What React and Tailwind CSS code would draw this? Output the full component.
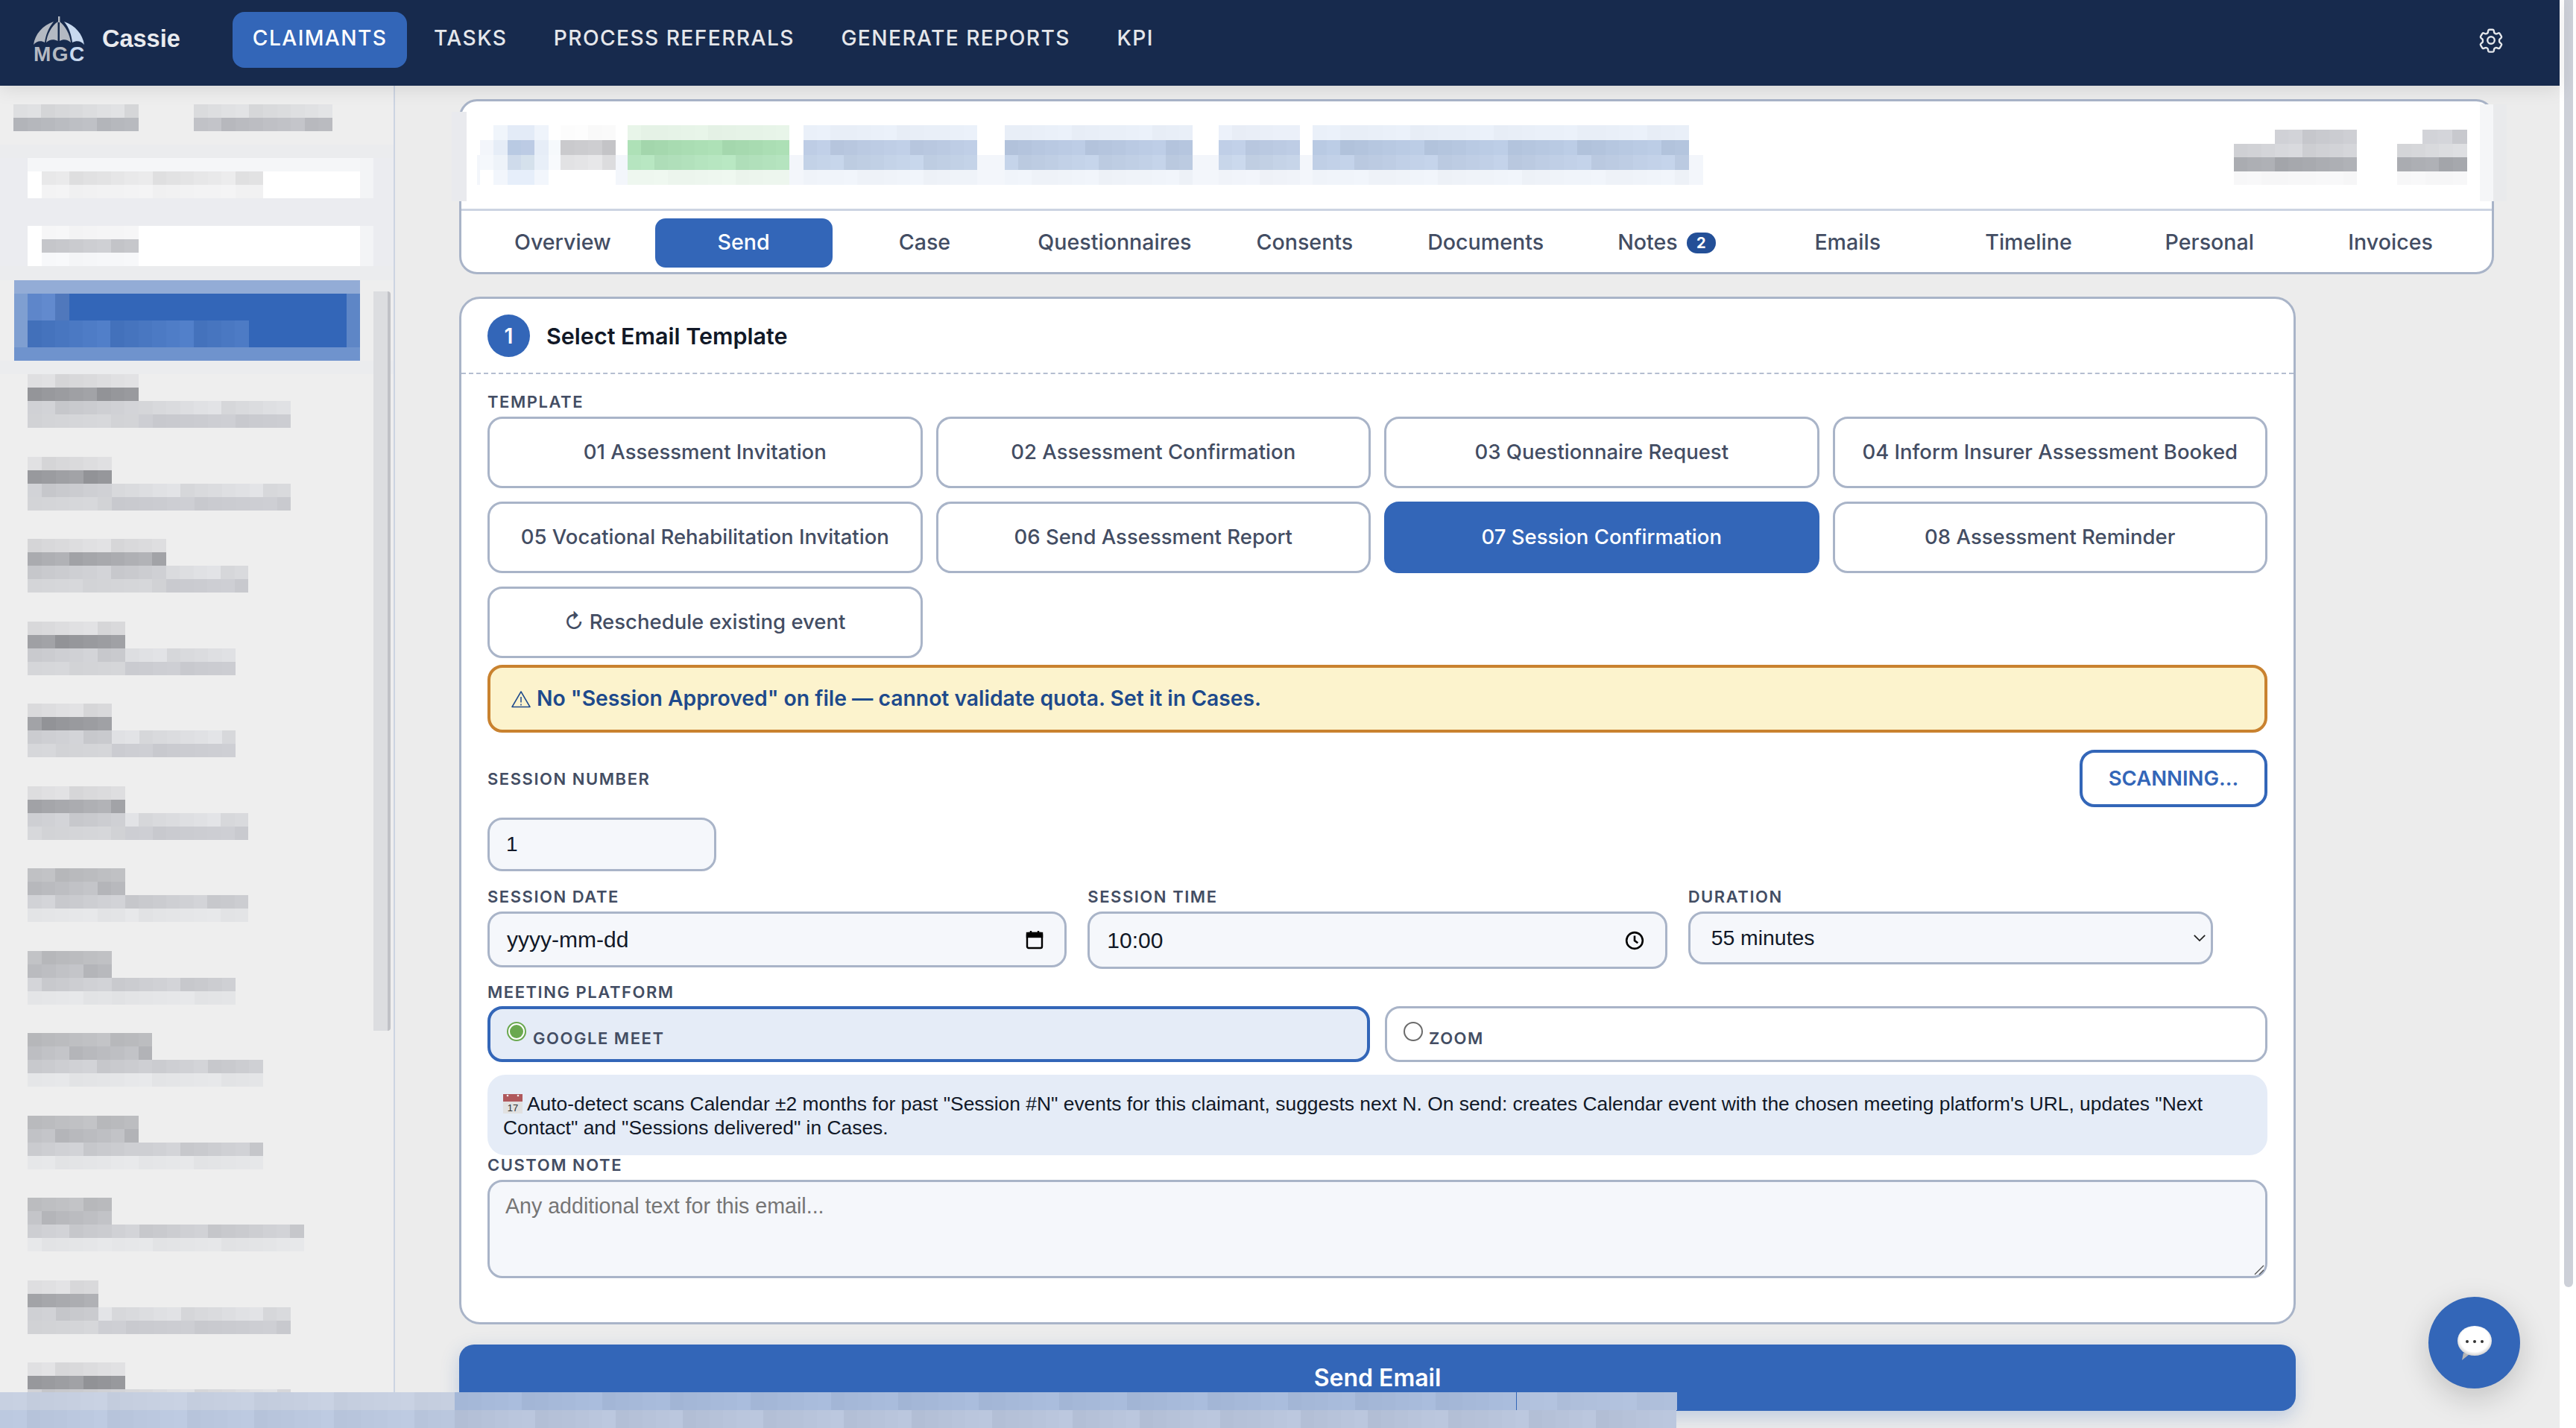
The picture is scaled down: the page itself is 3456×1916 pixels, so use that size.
import React from 'react';

const NAV = ['TASKS', 'PROCESS REFERRALS', 'GENERATE REPORTS', 'KPI'];
const TABS = ['Overview', 'Send', 'Case', 'Questionnaires', 'Consents', 'Documents', 'Notes', 'Emails', 'Timeline', 'Personal', 'Invoices'];
const TEMPLATES = [
  '01 Assessment Invitation',
  '02 Assessment Confirmation',
  '03 Questionnaire Request',
  '04 Inform Insurer Assessment Booked',
  '05 Vocational Rehabilitation Invitation',
  '06 Send Assessment Report',
  '07 Session Confirmation',
  '08 Assessment Reminder',
];

// name width / sub width of the pixelated rows in the sidebar
const PEOPLE = [
  [149, 353], [113, 353], [186, 296], [131, 279], [113, 279], [131, 296], [131, 296],
  [113, 279], [167, 316], [149, 316], [113, 371], [95, 353], [131, 353],
];

// the avatar in the claimant header, cell by cell
const AVATAR = [
  ['#ffffff', '#f0f5fb', '#e3ebf7', '#e3ebf7', '#eff4fb', '#ffffff'],
  ['#f3f6fb', '#e6edf7', '#b9cae3', '#bccbe4', '#e6edf7', '#f6f9fc'],
  ['#f5f8fc', '#eef3f9', '#cfdbeb', '#d5e1ec', '#e8eff8', '#f8fafd'],
  ['#ffffff', '#f2f6fc', '#e6eefa', '#e6eefa', '#f2f6fc', '#ffffff'],
];

// small jitter so the pixelated blocks do not look flat
function jitter(hex, i, amt = 7) {
  const n = parseInt(hex.slice(1), 16);
  const d = ((i * 37 + 11) % 17) / 16 - 0.5;
  const f = (v) => Math.max(0, Math.min(255, Math.round(v + d * amt * 2)));
  return `rgb(${f((n >> 16) & 255)},${f((n >> 8) & 255)},${f(n & 255)})`;
}

function Pixels({ width, color, h = 18, step = 18.5, seed = 0, amt }) {
  const count = Math.max(1, Math.round(width / step));
  return (
    <div className="flex shrink-0" style={{ width, height: h }}>
      {Array.from({ length: count }).map((_, i) => (
        <div key={i} className="flex-1" style={{ backgroundColor: jitter(color, i + seed, amt) }}></div>
      ))}
    </div>
  );
}

function BlurBlock({ width, rows, h = 20, step = 18.4, className = '' }) {
  return (
    <div className={`relative shrink-0 ${className}`} style={{ width }}>
      {rows.map((c, i) => (
        <Pixels key={i} width={width} color={c} h={h} step={step} seed={i * 5 + width} amt={i === 1 || i === 2 ? 6 : 2} />
      ))}
    </div>
  );
}

function Person({ name, sub, idx }) {
  // the lower rows of the list blur a little differently from the upper ones
  const lower = idx >= 6 && idx < 11;
  return (
    <div className="h-[110.5px] pl-[37px]">
      <Pixels width={name} color={lower ? '#bcbdc0' : '#dcdcde'} seed={idx} />
      <Pixels width={name} color={lower ? '#bbbcc0' : idx % 3 === 2 ? '#a9aaae' : '#9a9b9f'} seed={idx + 3} amt={9} />
      <div className="flex">
        <Pixels width={name} color={lower ? '#cdced2' : '#cccdd1'} seed={idx + 6} />
        <Pixels width={sub - name} color={lower ? '#cccdd1' : '#dcdde0'} seed={idx + 2} />
      </div>
      <div className="flex">
        <Pixels width={name} color={lower ? '#e5e6e8' : '#d4d5d8'} seed={idx + 8} amt={3} />
        <Pixels width={sub - name} color={lower ? '#e4e5e7' : '#cbccd1'} seed={idx + 1} amt={3} />
      </div>
    </div>
  );
}

function Label({ children, className = '' }) {
  return <p className={`text-[22px] leading-[26px] font-semibold tracking-[0.07em] uppercase text-[#434d63] font-['Inter',sans-serif] ${className}`}>{children}</p>;
}

function Logo() {
  return (
    <div className="w-[68px] h-[62px] relative shrink-0">
      <svg viewBox="0 0 68 40" className="w-[68px] h-[40px] block">
        <rect x="33" y="0" width="2.4" height="8" fill="#b4b9c2" />
        <path d="M0 38 C2 24 12 12 27 7 C20 15 16 26 15 35 C10 32 4 33 0 38 Z" fill="#b4b9c2" />
        <path d="M17 35 C18 25 24 13 32.5 7 L32.5 33 C27 30 21 31 17 35 Z" fill="#b4b9c2" />
        <path d="M35 7 C43 13 49 25 50 35 C46 31 40 30 35 33 Z" fill="#b4b9c2" />
        <path d="M41 7 C56 12 66 24 68 38 C64 33 58 32 52 35 C51 26 48 15 41 7 Z" fill="#c8d9ef" />
      </svg>
      <p className="absolute left-0 top-[37px] text-[28px] leading-[27px] font-bold font-['Liberation_Sans',sans-serif] text-[#b4b9c2] tracking-[0.05em] whitespace-nowrap">MG<span className="text-[#c8d9ef]">C</span></p>
    </div>
  );
}

function GearIcon() {
  return (
    <svg viewBox="0 0 24 24" className="w-[38px] h-[38px]" fill="none" stroke="#e5e7eb" strokeWidth="1.5" strokeLinecap="round" strokeLinejoin="round">
      <path d="M9.6 3.9c.1-.5.6-.9 1.1-.9h2.6c.5 0 1 .4 1.1.9l.2 1.4c.1.4.4.7.7.9l.4.2c.3.2.8.3 1.1.1l1.3-.5c.5-.2 1.1 0 1.4.5l1.3 2.2c.3.5.1 1.1-.3 1.4l-1.1.9c-.3.2-.5.6-.4 1v.9c0 .4.1.7.4 1l1.1.9c.4.3.6.9.3 1.4l-1.3 2.2c-.3.5-.9.7-1.4.5l-1.3-.5c-.4-.1-.8-.1-1.1.1l-.4.2c-.3.2-.6.5-.7.9l-.2 1.4c-.1.5-.6.9-1.1.9h-2.6c-.5 0-1-.4-1.1-.9l-.2-1.4c-.1-.4-.4-.7-.7-.9l-.4-.2c-.3-.2-.8-.3-1.1-.1l-1.3.5c-.5.2-1.1 0-1.4-.5l-1.3-2.2c-.3-.5-.1-1.1.3-1.4l1.1-.9c.3-.2.5-.6.4-1v-.9c0-.4-.1-.7-.4-1l-1.1-.9c-.4-.3-.6-.9-.3-1.4l1.3-2.2c.3-.5.9-.7 1.4-.5l1.3.5c.4.1.8.1 1.1-.1l.4-.2c.3-.2.6-.5.7-.9z" />
      <circle cx="12" cy="12" r="3" />
    </svg>
  );
}

function CalendarEmoji() {
  return (
    <svg viewBox="0 0 26 26" className="inline-block w-[26px] h-[26px] align-[-4px] mr-[6px]">
      <rect x="0" y="0" width="26" height="26" fill="#e1e1e1" />
      <rect x="0" y="0" width="26" height="10" fill="#b0585c" />
      <circle cx="6" cy="2" r="1.3" fill="#f2f2f2" />
      <circle cx="20" cy="2" r="1.3" fill="#f2f2f2" />
      <text x="13" y="23" textAnchor="middle" fontSize="13" fill="#333333" fontFamily="Liberation Sans, sans-serif">17</text>
    </svg>
  );
}

export default function App() {
  return (
    <div className="relative w-[3456px] h-[1916px] overflow-hidden bg-white flex font-['Inter',sans-serif]">
      <div className="w-[3434px] h-full flex flex-col bg-[#ececec]">

        {/* Top nav */}
        <header className="relative z-10 h-[115px] shrink-0 bg-[#172a4d] flex items-start pl-[45px] pr-[73px] shadow-[0_4px_24px_rgba(0,0,0,0.1)]">
          <div className="mt-[22px]"><Logo /></div>
          <span className="ml-[24px] mt-[32px] text-[32.5px] leading-[40px] font-semibold text-[#e9ebef] font-['Liberation_Sans',sans-serif]">Cassie</span>
          <nav className="ml-[70px] mt-[16px] flex items-start gap-[8.5px]">
            <a className="h-[75px] px-[27px] pt-[18px] rounded-[16px] bg-[#3366b8] text-[28.2px] leading-[34px] font-medium tracking-[0.05em] text-white">CLAIMANTS</a>
            {NAV.map((item) => (
              <a key={item} className="h-[75px] px-[27px] pt-[18px] text-[28.2px] leading-[34px] font-medium tracking-[0.05em] text-[#e5e7eb]">{item}</a>
            ))}
          </nav>
          <div className="ml-auto mt-[35px]"><GearIcon /></div>
        </header>

        <div className="flex-1 flex min-h-0">

          {/* Sidebar, names are pixelated in the source */}
          <aside className="relative w-[530px] shrink-0 bg-[#eeeeee] border-r-2 border-[#ccd4e2] overflow-hidden pt-[25px]">
            <div className="flex pl-[18px]">
              <div>
                <Pixels width={168} color="#dbdcde" />
                <Pixels width={168} color="#b9bbc0" seed={2} />
              </div>
              <div className="ml-[74px]">
                <Pixels width={186} color="#dcdddf" seed={4} />
                <Pixels width={186} color="#bdbec3" seed={6} />
              </div>
            </div>
            <div className="mt-[18px] h-[18px] bg-[#ebecee]"></div>
            <div className="bg-[#ebecf0] pl-[37px] pr-[27px]">
              <div className="bg-[#f3f4f6] pr-[18px]">
                <div className="bg-white">
                  <div className="h-[18px] bg-[#f5f6f8]"></div>
                  <div className="pl-[19px]"><Pixels width={297} color="#e5e5e6" /></div>
                  <div className="pl-[19px]"><Pixels width={297} color="#f2f2f3" amt={2} /></div>
                </div>
              </div>
              <div className="h-[37px]"></div>
              <div className="bg-[#f3f4f6] pr-[18px]">
                <div className="bg-white">
                  <div className="pl-[19px]"><Pixels width={130} color="#f5f5f6" amt={2} /></div>
                  <div className="pl-[19px]"><Pixels width={130} color="#c9cace" seed={3} /></div>
                  <div className="pl-[19px]"><Pixels width={130} color="#f6f7f9" amt={2} /></div>
                </div>
              </div>
            </div>
            <div className="h-[19px] bg-[#ebecee]"></div>
            <div className="ml-[19px] w-[464px] h-[108px] bg-[#3366b8] flex flex-col">
              <div className="h-[18px] bg-[#93acd6]"></div>
              <div className="flex-1 border-x-[18px] border-l-[#7f9fd1] border-r-[#5e86c6]">
                <Pixels width={56} color="#5a82c6" h={36} amt={10} />
                <Pixels width={297} color="#4a78c2" h={36} amt={8} seed={2} />
              </div>
              <div className="h-[18px] bg-[#6f93cd]"></div>
            </div>
            <div className="h-[18px] bg-[#ebecee]"></div>
            {PEOPLE.map((p, i) => (
              <Person key={i} name={p[0]} sub={p[1]} idx={i} />
            ))}
            {/* sidebar scrollbar */}
            <div className="absolute left-[501px] top-[276px] w-[23px] h-[992px] bg-[#dcdde0] border-r-[4px] border-[#c0c1c6] rounded-tr-[4px] rounded-br-[4px]"></div>
          </aside>

          <main className="flex-1 pl-[86px] pt-[18px] min-w-0 relative">

            {/* Claimant header + tabs */}
            <div className="w-[2730px] h-[235px] bg-white border-[3px] border-[#a9b4c8] rounded-[24px] flex flex-col">
              <div className="relative h-[147px] border-b-[3px] border-[#ccd4e2] pl-[25px] pr-[16px] pt-[32px] flex shrink-0">
                {/* haze between the blurred words */}
                <div className="absolute left-[21px] top-[72px] w-[1645px] h-[40px] bg-[#f3f6fb]"></div>
                <div className="relative shrink-0 w-[110px]">
                  {AVATAR.map((row, r) => (
                    <div key={r} className="flex h-[20px]">
                      {row.map((c, i) => (
                        <div key={i} className="flex-1" style={{ backgroundColor: c }}></div>
                      ))}
                    </div>
                  ))}
                </div>
                <BlurBlock width={74} className="ml-[-2px]" rows={['#fbfbfb', '#c8c8cb', '#e2e2e4', '#ffffff']} />
                <BlurBlock width={217} className="ml-[16px]" rows={['#e6f3e7', '#a9dcb2', '#b3e2bd', '#edf6ee']} />
                <BlurBlock width={233} className="ml-[19px]" rows={['#e9eff8', '#bccbe3', '#c2d1e6', '#eff3f9']} />
                <BlurBlock width={252} className="ml-[37px]" rows={['#e9eff8', '#b8c8e1', '#c0cfe5', '#eff3f9']} />
                <BlurBlock width={109} className="ml-[35px]" rows={['#eaeff8', '#bccbe3', '#c6d4e8', '#f0f3f9']} />
                <BlurBlock width={505} className="ml-[17px]" rows={['#e9eff8', '#b7c8e1', '#bfcee5', '#eff3f9']} />
                <div className="ml-auto flex gap-[19px] mt-[6px]">
                  <div className="w-[201px]">
                    <div className="ml-[73px]"><Pixels width={110} h={19} color="#cdced3" /></div>
                    <div className="ml-[18px]"><Pixels width={165} h={18} color="#d3d4d8" seed={3} /></div>
                    <div className="ml-[18px]"><Pixels width={165} h={19} color="#a9abb0" seed={5} /></div>
                    <div className="ml-[18px]"><Pixels width={165} h={18} color="#f7f7f8" amt={1} /></div>
                  </div>
                  <div className="w-[128px]">
                    <div className="ml-[51px]"><Pixels width={60} h={19} color="#cfd0d5" /></div>
                    <div className="ml-[17px]"><Pixels width={94} h={18} color="#d8d9dc" seed={3} /></div>
                    <div className="ml-[17px]"><Pixels width={94} h={19} color="#a9abb0" seed={5} /></div>
                    <div className="ml-[17px]"><Pixels width={94} h={18} color="#f7f7f8" amt={1} /></div>
                  </div>
                </div>
              </div>
              <div className="flex-1 flex items-center gap-[5px] px-[17px] pt-[3px]">
                {TABS.map((tab) => (
                  <div key={tab} className={`flex-1 h-[66px] px-[28px] rounded-[14px] flex items-center justify-center gap-[12px] text-[28.6px] font-medium whitespace-nowrap ${tab === 'Send' ? 'bg-[#3366b8] text-white' : 'text-[#434d63]'}`}>
                    {tab}
                    {tab === 'Notes' && <span className="w-[39px] h-[28px] rounded-full bg-[#234f97] text-white text-[20px] font-bold flex items-center justify-center">2</span>}
                  </div>
                ))}
              </div>
            </div>

            {/* Step 1 */}
            <section className="mt-[30px] w-[2464px] h-[1379px] bg-white border-[3px] border-[#a9b4c8] rounded-[28px]">
              <div className="h-[101px] border-b-2 border-dashed border-[#b4bed0] pl-[35px] flex items-center gap-[22px]">
                <div className="w-[57px] h-[57px] rounded-full bg-[#3366b8] text-white text-[28px] font-semibold flex items-center justify-center">1</div>
                <h2 className="text-[30.5px] font-semibold text-[#111827]">Select Email Template</h2>
              </div>

              <div className="pl-[35px] pr-[35px] pt-[24px]">
                <Label className="mb-[7px]">Template</Label>
                <div className="grid grid-cols-4 gap-x-[18px] gap-y-[18px]">
                  {TEMPLATES.map((t) => (
                    <button key={t} className={`h-[96px] rounded-[20px] border-[3px] text-[27.5px] font-medium flex items-center justify-center ${t.startsWith('07') ? 'bg-[#3366b8] border-[#3366b8] text-white' : 'bg-white border-[#a9b4c8] text-[#434d63]'}`}>{t}</button>
                  ))}
                  <button className="h-[96px] rounded-[20px] border-[3px] border-[#a9b4c8] bg-white text-[27.5px] font-medium text-[#434d63] flex items-center justify-center">↻ Reschedule existing event</button>
                </div>

                <div className="mt-[9px] h-[91px] rounded-[20px] border-[4px] border-[#c9822f] bg-[#fcf3cd] flex items-center gap-[8px] pl-[28px] text-[28.3px] font-semibold text-[#1e4a8c]">
                  <svg viewBox="0 0 26 24" className="w-[26px] h-[24px] shrink-0" fill="none" stroke="#1e4a8c" strokeWidth="1.5" strokeLinejoin="round">
                    <path d="M13 2 L25 22.5 L1 22.5 Z" />
                    <path d="M13 9 V16.5 M13 18.5 V20.5" />
                  </svg>
                  <span>No "Session Approved" on file — cannot validate quota. Set it in Cases.</span>
                </div>

                <div className="mt-[23px] flex items-center justify-between">
                  <Label>Session Number</Label>
                  <button className="w-[252px] h-[77px] rounded-[20px] border-[4px] border-[#3366b8] bg-white text-[27.5px] font-semibold text-[#3366b8]">SCANNING...</button>
                </div>

                <input readOnly defaultValue="1" className="mt-[14px] block w-[307px] h-[72px] rounded-[20px] border-[3px] border-[#a9b4c8] bg-[#f5f7fb] pl-[22px] text-[28px] text-[#111827] font-['Liberation_Sans',sans-serif] outline-none" />

                <div className="mt-[21px] grid grid-cols-3 gap-x-[28px] items-start">
                  <div>
                    <Label className="mb-[7px]">Session Date</Label>
                    <div className="h-[75px] rounded-[20px] border-[3px] border-[#a9b4c8] bg-[#f5f7fb] pl-[23px] pr-[28px] flex items-center justify-between text-[30px] text-[#111827] font-['Liberation_Sans',sans-serif]">
                      <span>yyyy-mm-dd</span>
                      <svg viewBox="0 0 24 26" className="w-[24px] h-[26px]" fill="none" stroke="#000000" strokeWidth="2.4">
                        <rect x="2" y="4" width="20" height="20" rx="2" />
                        <rect x="2" y="4" width="20" height="5" fill="#000000" />
                        <path d="M7 1v4M17 1v4" />
                      </svg>
                    </div>
                  </div>
                  <div>
                    <Label className="mb-[7px]">Session Time</Label>
                    <div className="h-[77px] rounded-[20px] border-[3px] border-[#a9b4c8] bg-[#f5f7fb] pl-[23px] pr-[28px] flex items-center justify-between text-[30px] text-[#111827] font-['Liberation_Sans',sans-serif]">
                      <span>10:00</span>
                      <svg viewBox="0 0 24 24" className="w-[26px] h-[26px]" fill="none" stroke="#000000" strokeWidth="2.4">
                        <circle cx="12" cy="12" r="10" />
                        <path d="M12 6v6l4 3" />
                      </svg>
                    </div>
                  </div>
                  <div>
                    <Label className="mb-[7px]">Duration</Label>
                    <div className="w-[704px] h-[71px] rounded-[20px] border-[3px] border-[#a9b4c8] bg-[#f5f7fb] pl-[28px] pr-[6px] flex items-center justify-between text-[28.4px] text-[#111827] font-['Liberation_Sans',sans-serif]">
                      <span>55 minutes</span>
                      <svg viewBox="0 0 20 12" className="w-[18px] h-[11px]" fill="none" stroke="#222222" strokeWidth="2">
                        <path d="M2 2l8 8 8-8" />
                      </svg>
                    </div>
                  </div>
                </div>

                <Label className="mt-[18px] mb-[6px]">Meeting Platform</Label>
                <div className="grid grid-cols-2 gap-x-[20px]">
                  <label className="h-[75px] rounded-[20px] border-[4px] border-[#3366b8] bg-[#e5ecf7] pl-[22px] pt-[17px] flex items-start gap-[9px]">
                    <span className="w-[26px] h-[26px] rounded-full border-[2px] border-[#6aa84f] bg-white flex items-center justify-center shrink-0">
                      <span className="w-[18px] h-[18px] rounded-full bg-[#6aa84f]"></span>
                    </span>
                    <span className="mt-[9px] text-[22px] leading-[26px] font-semibold tracking-[0.07em] text-[#434d63]">GOOGLE MEET</span>
                  </label>
                  <label className="h-[75px] rounded-[20px] border-[3px] border-[#a9b4c8] bg-white pl-[22px] pt-[18px] flex items-start gap-[8px]">
                    <span className="w-[26px] h-[26px] rounded-full border-[2px] border-[#6b6b6b] bg-white shrink-0"></span>
                    <span className="mt-[9px] text-[22px] leading-[26px] font-semibold tracking-[0.07em] text-[#434d63]">ZOOM</span>
                  </label>
                </div>

                <div className="mt-[17px] h-[108px] rounded-[24px] bg-[#e5ecf7] pl-[21px] pr-[60px] pt-[23px] text-[26.4px] leading-[32px] text-[#111827] font-['Liberation_Sans',sans-serif]">
                  <CalendarEmoji />Auto-detect scans Calendar ±2 months for past "Session #N" events for this claimant, suggests next N. On send: creates Calendar event with the chosen meeting platform's URL, updates "Next Contact" and "Sessions delivered" in Cases.
                </div>

                <Label className="leading-[24px] mb-[7px]">Custom Note</Label>
                <div className="relative">
                  <textarea placeholder="Any additional text for this email..." className="block w-full h-[132px] rounded-[20px] border-[3px] border-[#a9b4c8] bg-[#f5f7fb] px-[21px] py-[15px] text-[28.6px] leading-[34px] text-[#111827] placeholder:text-[#757575] font-['Liberation_Sans',sans-serif] outline-none resize-none"></textarea>
                  {/* resize handle */}
                  <svg viewBox="0 0 14 14" className="absolute right-[4px] bottom-[4px] w-[14px] h-[14px]" fill="none" stroke="#555555" strokeWidth="1.4">
                    <path d="M1 13 L13 1 M7 13 L13 7" />
                  </svg>
                </div>
              </div>
            </section>

            <button className="mt-[27px] w-[2464px] h-[89px] rounded-[20px] bg-[#3366b8] text-white text-[32px] font-semibold shadow-[0_8px_24px_rgba(51,102,184,0.25)] block">Send Email</button>

            {/* pixelated edges over the header card */}
            <div className="absolute left-[76px] top-[35px] w-[20px] h-[120px] bg-[#e9eaee]"></div>
            <div className="absolute left-[2797px] top-[25px] w-[18px] h-[130px] bg-[#f5f6f8]"></div>
            <div className="absolute left-[2815px] top-[25px] w-[18px] h-[130px] bg-[#e9eaec]"></div>
          </main>
        </div>
      </div>

      {/* page scrollbar */}
      <div className="w-[22px] h-full bg-white pl-[6px] shrink-0">
        <div className="w-[12px] h-[1727px] bg-[#cdd0d8] rounded-b-[6px]"></div>
      </div>

      {/* chat bubble */}
      <button className="absolute left-[3258px] top-[1740px] w-[123px] h-[123px] rounded-full bg-[#3366b8] shadow-[0_12px_40px_rgba(0,0,0,0.18)] flex items-center justify-center">
        <svg viewBox="0 0 46 46" className="w-[46px] h-[46px]">
          <defs>
            <radialGradient id="bubble" cx="50%" cy="45%" r="60%">
              <stop offset="70%" stopColor="#ffffff" />
              <stop offset="100%" stopColor="#bdbdbd" />
            </radialGradient>
          </defs>
          <path d="M8 36 L6 46 L16 38 Z" fill="#b5b5b5" />
          <ellipse cx="23" cy="20" rx="23" ry="20" fill="url(#bubble)" />
          <circle cx="13" cy="21" r="2" fill="#333333" />
          <circle cx="23" cy="21" r="2" fill="#333333" />
          <circle cx="33" cy="21" r="2" fill="#333333" />
        </svg>
      </button>

      {/* pixelated line along the bottom */}
      <div className="absolute left-0 top-[1868px] w-[2250px]">
        <div className="flex">
          <Pixels width={610} h={24} step={18} color="#c6cfe0" amt={3} />
          <Pixels width={1425} h={24} step={18} color="#a6b9d9" seed={3} amt={4} />
          <Pixels width={215} h={24} step={18} color="#b0c0dc" seed={5} amt={3} />
        </div>
        <div className="flex">
          <Pixels width={610} h={24} step={18} color="#bac7de" amt={4} />
          <Pixels width={1640} h={24} step={18} color="#b7c3da" seed={2} amt={5} />
        </div>
      </div>
    </div>
  );
}
